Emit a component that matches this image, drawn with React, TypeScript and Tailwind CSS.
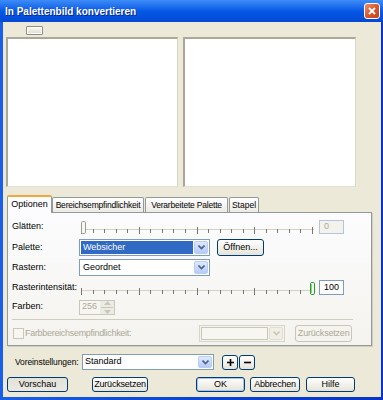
import React from "react";

const Chevron = ({ color = "#4d6185" }: { color?: string }) => (
  <svg width="7" height="5" viewBox="0 0 7 5">
    <path d="M0.5 0.5 L3.5 3.5 L6.5 0.5" fill="none" stroke={color} strokeWidth="1.6" />
  </svg>
);

const ArrowBtn = ({ disabled }: { disabled?: boolean }) => (
  <div
    className={
      "w-[14px] h-full flex items-center justify-center rounded-[2px] border " +
      (disabled
        ? "border-[#e0ded4] bg-[#f1efe5]"
        : "border-[#b9cdf5] bg-gradient-to-b from-[#dfe9fe] to-[#b4cbf8]")
    }
  >
    <Chevron color={disabled ? "#c9c7ba" : "#4d6185"} />
  </div>
);

function Slider({ thumb, green }: { thumb: number; green?: boolean }) {
  const ticks = Array.from({ length: 21 }, (_, i) => i);
  return (
    <svg width="237" height="17" viewBox="0 0 237 17" className="block">
      <line x1="2" y1="11.5" x2="235" y2="11.5" stroke="#d4d1c3" strokeWidth="1" />
      {ticks.map((i) => {
        const x = Math.round(2 + i * 11.55) + 0.5;
        const long = i % 5 === 0;
        return (
          <line key={i} x1={x} y1={long ? 9 : 11} x2={x} y2={long ? 16 : 15} stroke="#7a786d" strokeWidth="1" />
        );
      })}
      <rect
        x={thumb + 0.5}
        y="3.5"
        width="4"
        height="12"
        rx="1.2"
        fill="#f7f7f3"
        stroke={green ? "#21a121" : "#9c9a8e"}
        strokeWidth="1"
      />
      {green && <line x1={thumb + 1.5} y1="5" x2={thumb + 1.5} y2="14" stroke="#8fd48f" strokeWidth="1" />}
    </svg>
  );
}

const Btn = ({
  children,
  className = "",
  def,
  disabled,
  pressed,
}: {
  children?: React.ReactNode;
  className?: string;
  def?: boolean;
  disabled?: boolean;
  pressed?: boolean;
}) => (
  <div
    className={
      "flex items-center justify-center rounded-[3px] border whitespace-nowrap " +
      (disabled
        ? "border-[#c9c7ba] bg-[#f4f3ee] text-[#aca899] "
        : pressed
        ? "border-[#003c74] bg-gradient-to-b from-[#e3e2da] to-[#ebe9e0] "
        : "border-[#003c74] bg-gradient-to-b from-[#ffffff] to-[#e6e3d8] ") +
      (def ? "shadow-[inset_0_0_0_1px_#a8c4f2] " : "") +
      className
    }
  >
    {children}
  </div>
);

export default function App() {
  return (
    <div className="w-[383px] h-[400px] flex flex-col bg-gradient-to-r from-[#1a5fea] via-[#0a44d6] to-[#0835c8] font-['Liberation_Sans',Arial,sans-serif] text-[9px] text-black overflow-hidden">
      {/* Title bar */}
      <div className="h-[22px] shrink-0 flex items-center pl-[5px] pr-[3px] bg-gradient-to-b from-[#3d8cf7] via-[#0658e6] to-[#0448d2]">
        <span className="flex-1 text-white font-bold text-[10px] [text-shadow:1px_1px_0_#0a2a88]">
          In Palettenbild konvertieren
        </span>
        <div className="w-[16px] h-[16px] rounded-[3px] border border-white bg-gradient-to-br from-[#e8916b] via-[#d8582c] to-[#c4421a] flex items-center justify-center">
          <svg width="8" height="8" viewBox="0 0 8 8">
            <path d="M1 1 L7 7 M7 1 L1 7" stroke="white" strokeWidth="1.8" />
          </svg>
        </div>
      </div>

      {/* Body */}
      <div className="flex-1 ml-[3px] mr-[2px] mb-[3px] bg-[#ece9d8] flex flex-col">
        {/* tiny button */}
        <div className="ml-[23px] mt-[4px] w-[17px] h-[9px] rounded-[1px] border border-[#8f8d80] bg-gradient-to-b from-[#fbfbf8] to-[#dedbcc] shadow-[inset_0_0_0_1px_#ffffff]" />

        {/* preview panels */}
        <div className="mt-[2px] ml-[3px] flex gap-[5px] h-[150px]">
          <div className="w-[172px] h-full bg-white border-t-2 border-l-2 border-t-[#aca899] border-l-[#aca899] border-r border-b border-r-[#d9d6c6] border-b-[#e4e1d3]" />
          <div className="w-[173px] h-full bg-white border-t-2 border-l-2 border-t-[#aca899] border-l-[#aca899] border-r border-b border-r-[#d9d6c6] border-b-[#e4e1d3]" />
        </div>

        {/* tabs */}
        <div className="mt-[8px] ml-[4px] flex items-end h-[17px] relative z-10 text-[8.5px]">
          <div className="w-[45px] h-[18px] -mb-px bg-[#fcfcfe] border-x border-[#919b9c] border-t-2 border-t-[#f2a83a] rounded-t-[2px] flex items-center justify-center pb-[1px] text-[9px]">
            Optionen
          </div>
          <div className="ml-0 w-[92px] h-[15px] bg-gradient-to-b from-[#ffffff] to-[#ecebe4] border-x border-t border-[#919b9c] rounded-t-[2px] flex items-center justify-center tracking-[-0.2px]">
            Bereichsempfindlichkeit
          </div>
          <div className="ml-[1px] w-[83px] h-[15px] bg-gradient-to-b from-[#ffffff] to-[#ecebe4] border-x border-t border-[#919b9c] rounded-t-[2px] flex items-center justify-center tracking-[-0.2px]">
            Verarbeitete Palette
          </div>
          <div className="ml-[1px] w-[30px] h-[15px] bg-gradient-to-b from-[#ffffff] to-[#ecebe4] border-x border-t border-[#919b9c] rounded-t-[2px] flex items-center justify-center">
            Stapel
          </div>
        </div>

        {/* tab panel */}
        <div className="ml-[4px] w-[365px] h-[134px] border border-[#919b9c] shadow-[1px_1px_0_#d0cebf] bg-gradient-to-b from-[#fcfcfe] to-[#f4f3ee] pl-[4px] flex flex-col">
          {/* Glätten */}
          <div className="mt-[5px] h-[17px] flex items-center">
            <span className="w-[67px]">Glätten:</span>
            <Slider thumb={2} />
            <div className="ml-[3px] w-[25px] h-[14px] border border-[#b5c4d9] bg-[#f3f2ec] text-[#aca899] pl-[4px] flex items-center">
              0
            </div>
          </div>
          {/* Palette */}
          <div className="mt-[4px] h-[17px] flex items-center">
            <span className="w-[67px]">Palette:</span>
            <div className="w-[131px] h-[17px] border border-[#7f9db9] bg-white flex items-stretch p-[1px]">
              <div className="flex-1 bg-[#316ac5] text-white flex items-center pl-[2px] mr-[1px]">Websicher</div>
              <ArrowBtn />
            </div>
            <Btn className="ml-[7px] w-[47px] h-[17px]">Öffnen...</Btn>
          </div>
          {/* Rastern */}
          <div className="mt-[3px] h-[17px] flex items-center">
            <span className="w-[67px]">Rastern:</span>
            <div className="w-[131px] h-[17px] border border-[#7f9db9] bg-white flex items-stretch p-[1px]">
              <div className="flex-1 flex items-center pl-[2px] mr-[1px]">Geordnet</div>
              <ArrowBtn />
            </div>
          </div>
          {/* Rasterintensität */}
          <div className="mt-[3px] h-[17px] flex items-center">
            <span className="w-[67px] whitespace-nowrap">Rasterintensität:</span>
            <Slider thumb={231} green />
            <div className="ml-[3px] w-[25px] h-[15px] border border-[#7f9db9] bg-white pl-[4px] flex items-center">
              100
            </div>
          </div>
          {/* Farben */}
          <div className="mt-[3px] h-[16px] flex items-center">
            <span className="w-[67px]">Farben:</span>
            <div className="w-[36px] h-[15px] border border-[#c9c7ba] bg-[#f7f6f1] flex items-stretch">
              <div className="flex-1 text-[#aca899] pl-[2px] flex items-center">256</div>
              <div className="w-[14px] flex flex-col items-center justify-center gap-[2px] bg-[#ecebe4]">
                <svg width="7" height="4" viewBox="0 0 7 4">
                  <path d="M0 4 L3.5 0 L7 4 Z" fill="#c9c7ba" />
                </svg>
                <div className="w-[12px] h-px bg-[#c9c7ba]" />
                <svg width="7" height="4" viewBox="0 0 7 4">
                  <path d="M0 0 L3.5 4 L7 0 Z" fill="#c9c7ba" />
                </svg>
              </div>
            </div>
          </div>
          {/* separator */}
          <div className="mt-[4px] w-[341px] h-px bg-[#d0cdbd]" />
          {/* Checkbox row */}
          <div className="mt-[5px] h-[17px] flex items-center">
            <div className="ml-[1px] w-[11px] h-[11px] border border-[#cac8bb] bg-[#f7f6f1]" />
            <span className="ml-[1px] text-[#aca899] tracking-[-0.3px] whitespace-nowrap">Farbbereichsempfindlichkeit:</span>
            <div className="ml-[68px] w-[86px] h-[17px] border border-[#d7d5c8] bg-[#f4f3ee] flex items-stretch p-[1px]">
              <div className="flex-1 mr-[1px] border border-[#c9c7ba] bg-[#f7f6f1]" />
              <ArrowBtn disabled />
            </div>
            <Btn disabled className="ml-[10px] w-[57px] h-[17px] tracking-[-0.2px]">Zurücksetzen</Btn>
          </div>
        </div>

        {/* Voreinstellungen row */}
        <div className="mt-[8px] h-[16px] flex items-center">
          <span className="ml-[12px] w-[67px] whitespace-nowrap text-[8.5px] tracking-[-0.1px]">Voreinstellungen:</span>
          <div className="w-[132px] h-[16px] border border-[#7f9db9] bg-white flex items-stretch p-[1px]">
            <div className="flex-1 flex items-center pl-[1px]">Standard</div>
            <ArrowBtn />
          </div>
          <Btn className="ml-[8px] w-[16px] h-[15px]">
            <svg width="7" height="7" viewBox="0 0 7 7">
              <path d="M3.5 0 V7 M0 3.5 H7" stroke="#000" strokeWidth="1.6" />
            </svg>
          </Btn>
          <Btn className="ml-[1px] w-[16px] h-[15px]">
            <svg width="7" height="7" viewBox="0 0 7 7">
              <path d="M0 3.5 H7" stroke="#000" strokeWidth="1.6" />
            </svg>
          </Btn>
        </div>

        {/* button row */}
        <div className="mt-[7px] h-[15px] flex items-center">
          <Btn pressed className="ml-[4px] w-[61px] h-[15px]">Vorschau</Btn>
          <Btn className="ml-[24px] w-[56px] h-[15px] tracking-[-0.2px]">Zurücksetzen</Btn>
          <Btn def className="ml-[48px] w-[49px] h-[15px]">OK</Btn>
          <Btn className="ml-[5px] w-[50px] h-[15px] tracking-[-0.2px]">Abbrechen</Btn>
          <Btn className="ml-[6px] w-[49px] h-[15px]">Hilfe</Btn>
        </div>
      </div>
    </div>
  );
}
